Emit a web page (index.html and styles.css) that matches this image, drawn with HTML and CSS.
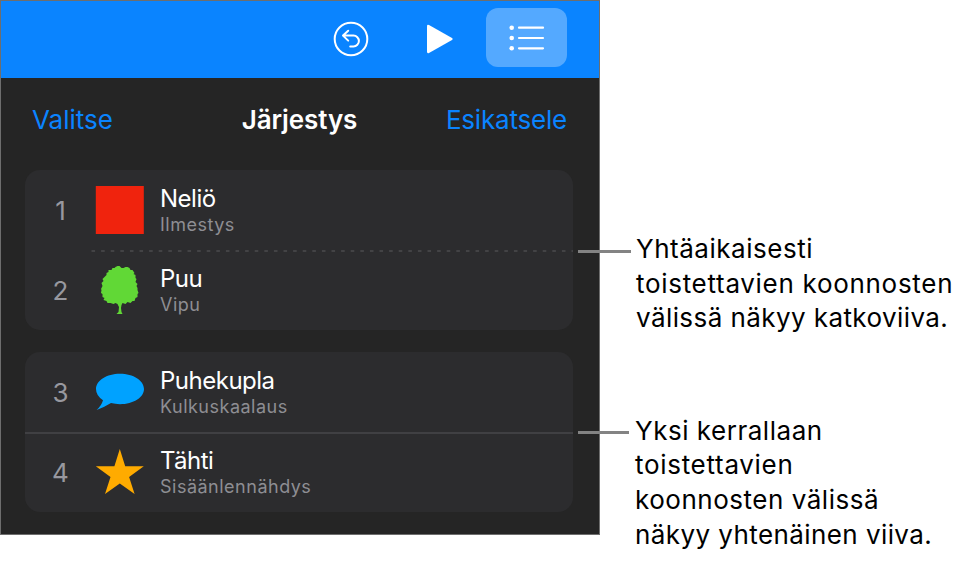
FILE: index.html
```html
<!DOCTYPE html>
<html lang="fi">
<head>
    <meta charset="UTF-8">
    <meta name="viewport" content="width=device-width, initial-scale=1.0">
    <title>Järjestys</title>
    <link rel="stylesheet" href="styles.css">
</head>
<body>
    <div class="figure">
        <div class="panel">
            <div class="toolbar">
                <svg class="icon-undo" width="36" height="36" viewBox="0 0 36 36" fill="none" stroke="#fff" stroke-width="2" stroke-linecap="round" stroke-linejoin="round">
                    <circle cx="18" cy="18" r="16.3"/>
                    <path d="M15.2 9.8 L10 14.6 L15.2 19.6 M10.4 14.6 H20.5 A5.4 5.4 0 0 1 20.5 25.4 H17.2"/>
                </svg>
                <svg class="icon-play" width="28" height="30" viewBox="0 0 28 30" fill="#fff">
                    <path d="M1 2.2 Q1 .1 3 1 L26 13.9 Q27.6 15 26 16.1 L3 29 Q1 29.9 1 27.8 Z"/>
                </svg>
                <div class="list-button">
                    <svg width="36" height="26" viewBox="0 0 36 26" fill="#fff" stroke="#fff" stroke-width="2.2" stroke-linecap="round">
                        <g stroke="none">
                            <circle cx="2.7" cy="2.7" r="2.3"/>
                            <circle cx="2.7" cy="13" r="2.3"/>
                            <circle cx="2.7" cy="23.3" r="2.3"/>
                        </g>
                        <path d="M10 2.7 H34 M10 13 H34 M10 23.3 H34"/>
                    </svg>
                </div>
            </div>

            <div class="header">
                <span class="link select">Valitse</span>
                <span class="title">Järjestys</span>
                <span class="link preview">Esikatsele</span>
            </div>

            <div class="card">
                <div class="row">
                    <span class="number">1</span>
                    <svg class="shape" width="50" height="50" viewBox="0 0 50 50">
                        <rect x="0.8" y="1" width="48" height="48" fill="#f0230d"/>
                    </svg>
                    <div class="label">
                        <div class="name">Neliö</div>
                        <div class="effect">Ilmestys</div>
                    </div>
                </div>
                <svg class="dashed" width="482" height="2" viewBox="0 0 482 2">
                    <path d="M0.5 1 H482" stroke="#4b4b4e" stroke-width="1.4" stroke-dasharray="3.6 6"/>
                </svg>
                <div class="row">
                    <span class="number">2</span>
                    <svg class="shape" width="50" height="50" viewBox="0 0 50 50">
                        <path fill="#61d836" transform="translate(-1.5 0)" d="M21 3 L22 2 L24 1 L26 1 L28 3 L30 3 L32 2 L34 2 L36 3 L37 5 L39 5 L41 8 L40 9 L42 10 L42 13 L43 14 L42 17 L44 19 L43 21 L44 23 L44 25 L45 28 L44 29 L44 32 L42 33 L41 36 L39 36 L37 38 L34 37 L32 39 L29 38 L28 40 L27.5 43 L28 47 L29 49 L23 49 L25 47 L25.5 42 L24 39 L22 38 L20 39 L17 38 L14 38 L13 36 L10 35 L11 33 L9 32 L9 29 L7.5 28 L8 25 L7.5 24 L9 21 L8 18 L10 16 L9 14 L11 12 L13 10 L13 8 L15 7 L15 5 L18 5 L19 3 Z"/>
                    </svg>
                    <div class="label">
                        <div class="name">Puu</div>
                        <div class="effect">Vipu</div>
                    </div>
                </div>
            </div>

            <div class="card">
                <div class="row">
                    <span class="number">3</span>
                    <svg class="shape" width="50" height="50" viewBox="0 0 50 50">
                        <path fill="#00a2ff" d="M25 6.8 C38.3 6.8 49 13.6 49 22 C49 30.4 38.3 37.2 25 37.2 Q20.3 37.2 16 36.1 Q9 40.5 1.6 43 Q6.5 38.5 8 33.2 Q1 28.6 1 22 C1 13.6 11.7 6.8 25 6.8 Z"/>
                    </svg>
                    <div class="label">
                        <div class="name">Puhekupla</div>
                        <div class="effect">Kulkuskaalaus</div>
                    </div>
                </div>
                <div class="solid"></div>
                <div class="row">
                    <span class="number">4</span>
                    <svg class="shape" width="50" height="50" viewBox="0 0 50 50">
                        <path fill="#ffab00" d="M24.8 2 L30.2 19.2 H48.8 L34.1 29.9 L39.6 47 L24.8 36.4 L10 47 L15.5 29.9 L.8 19.2 H19.4 Z"/>
                    </svg>
                    <div class="label">
                        <div class="name">Tähti</div>
                        <div class="effect">Sisäänlennähdys</div>
                    </div>
                </div>
            </div>
        </div>

        <div class="notes">
            <p class="note note-dashed">Yhtäaikaisesti<br><span class="wide">toistettavien koonnosten</span><br><span class="tight">välissä näkyy katkoviiva.</span></p>
            <p class="note note-solid">Yksi kerrallaan<br><span class="wide">toistettavien</span><br>koonnosten välissä<br><span class="tight">näkyy yhtenäinen viiva.</span></p>
        </div>
    </div>
</body>
</html>
```

FILE: styles.css
```css
* {
    box-sizing: border-box;
}

body {
    margin: 0;
    background: #fff;
    font-family: Inter, "Liberation Sans", sans-serif;
    overflow: hidden;
}

.figure {
    display: flex;
    width: 966px;
    height: 561px;
}

.panel {
    flex: none;
    width: 600px;
    height: 535px;
    background: #252525;
    border: 1px solid #6e6e6e;
}

.toolbar {
    display: flex;
    align-items: center;
    justify-content: flex-end;
    height: 77px;
    padding: 0 32px 2px 0;
    background: #0a84ff;
}

.icon-undo {
    margin-right: 57px;
}

.icon-play {
    margin-right: 32px;
}

.list-button {
    display: flex;
    align-items: center;
    justify-content: center;
    width: 81px;
    height: 59px;
    margin-top: -2px;
    border-radius: 12px;
    background: #54a9ff;
}

.header {
    display: grid;
    grid-template-columns: 1fr auto 1fr;
    align-items: center;
    height: 82px;
    padding: 0 32px 0 31px;
    font-size: 26px;
    white-space: nowrap;
}

.link {
    color: #0a84ff;
}

.preview {
    text-align: right;
    letter-spacing: -0.2px;
}

.title {
    color: #fff;
    font-weight: 600;
    letter-spacing: -0.1px;
}

.card {
    width: 548px;
    height: 160px;
    margin: 10px 0 22px 24px;
    border-radius: 15px;
    background: #2c2c2e;
}

.card + .card {
    margin-top: 0;
}

.row {
    display: flex;
    align-items: center;
    height: 80px;
}

.number {
    width: 70px;
    padding-left: 1px;
    text-align: center;
    font-size: 26px;
    color: #98989f;
}

.shape {
    flex: none;
    margin-right: 15px;
}

.label {
    padding-top: 2px;
    white-space: nowrap;
}

.name {
    font-size: 24px;
    line-height: 28px;
    letter-spacing: -0.5px;
    color: #fff;
}

.effect {
    font-size: 18px;
    line-height: 24px;
    letter-spacing: 0.5px;
    color: #8e8e93;
}

.dashed {
    display: block;
    margin: 0 0 -2px 66px;
}

.solid {
    height: 2px;
    margin-bottom: -2px;
    background: #404043;
}

.notes {
    padding: 232px 0 0 36px;
}

.note {
    position: relative;
    margin: 0;
    font-size: 26px;
    line-height: 34.5px;
    letter-spacing: 0.52px;
    color: #000;
    white-space: nowrap;
}

.wide {
    letter-spacing: 0.7px;
}

.tight {
    letter-spacing: 0.42px;
}

.note-solid {
    margin: 78px 0 0 -1px;
    line-height: 34.8px;
}

/* leader line that reaches into the panel */
.note::before {
    content: '';
    position: absolute;
    left: -58px;
    top: 18px;
    width: 53px;
    height: 3px;
    background: #838383;
}

.note-solid::before {
    left: -57px;
    top: 17px;
    width: 51px;
}
```
